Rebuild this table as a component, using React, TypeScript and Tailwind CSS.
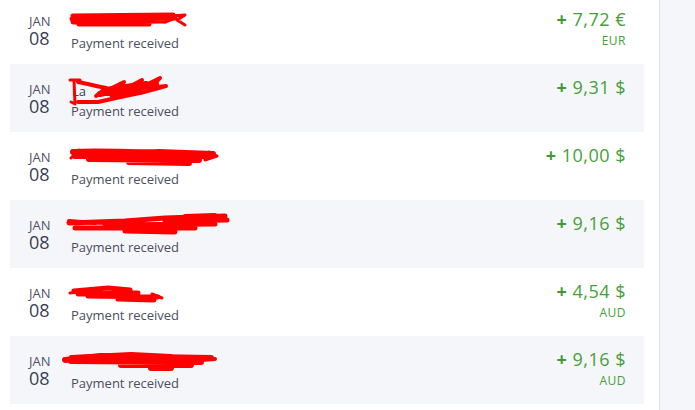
import React from "react";

type Tx = {
  amount: string;
  code?: string;
  scribble: React.ReactNode;
  gray: boolean;
};

const R = "#ff0000";
const P = {
  stroke: R,
  fill: "none",
  strokeLinecap: "round" as const,
  strokeLinejoin: "round" as const,
};

const S1 = (
  <svg className="absolute left-[59px] top-[15px]" width="122" height="18" viewBox="0 0 122 18">
    <path {...P} strokeWidth="5" d="M4 5 L104 4 M3 8 L106 7 M4 11 L96 10 M10 13 L80 13" />
    <path {...P} strokeWidth="3" d="M100 5 L116 4 L108 9 L116 14 M96 11 L104 8" />
  </svg>
);

const S2 = (
  <div className="absolute left-[56px] top-[8px] h-[36px] w-[108px]">
    <span className="absolute left-[6px] top-[10px] text-[13px] leading-[18px] text-[#3a3f51]">La</span>
    <svg className="absolute left-0 top-0" width="108" height="36" viewBox="0 0 108 36">
      <path {...P} strokeWidth="3" d="M4 8 L14 8 M8 8 L9 32 L5 30" />
      <path {...P} strokeWidth="4" d="M12 10 C22 12 30 14 40 16 L30 24 L58 10 L46 24 L76 8 L62 22 L94 6 L84 16 L100 14 L78 20 L50 26 L32 30 L12 30" />
      <path {...P} strokeWidth="6" d="M34 22 L70 14 L90 12 L46 22 L74 20 M40 18 L80 12" />
    </svg>
  </div>
);

const S3 = (
  <svg className="absolute left-[59px] top-[14px]" width="152" height="22" viewBox="0 0 152 22">
    <path {...P} strokeWidth="6" d="M4 6 C30 4 60 7 90 6 L144 8 M6 10 L140 10 M20 13 L130 14 M60 16 L120 17" />
    <path {...P} strokeWidth="3" d="M2 12 L10 4 M140 6 L148 10 L136 14" />
  </svg>
);

const S4 = (
  <svg className="absolute left-[55px] top-[11px]" width="170" height="26" viewBox="0 0 170 26">
    <path {...P} strokeWidth="5" d="M4 12 L60 10 L100 7 L160 5 M100 10 L162 9 M40 14 L150 13 M10 17 L130 17 M60 20 L110 21" />
    <path {...P} strokeWidth="4" d="M4 10 L30 12 M120 5 L150 4" />
  </svg>
);

const S5 = (
  <svg className="absolute left-[58px] top-[16px]" width="98" height="20" viewBox="0 0 98 20">
    <path {...P} strokeWidth="5" d="M6 7 L40 4 L62 6 M10 10 L70 9 M20 12 L90 13 M50 15 L86 16" />
    <path {...P} strokeWidth="3" d="M2 9 L10 8 M84 10 L94 14" />
  </svg>
);

const S6 = (
  <svg className="absolute left-[51px] top-[14px]" width="160" height="22" viewBox="0 0 160 22">
    <path {...P} strokeWidth="6" d="M4 10 L40 6 L90 7 L150 8 M10 11 L140 12 M60 15 L130 15 M90 18 L110 18" />
    <path {...P} strokeWidth="4" d="M10 7 L70 4 L110 6 M140 10 L154 9" />
  </svg>
);

const txs: Tx[] = [
  { amount: "7,72 €", code: "EUR", scribble: S1, gray: false },
  { amount: "9,31 $", scribble: S2, gray: true },
  { amount: "10,00 $", scribble: S3, gray: false },
  { amount: "9,16 $", scribble: S4, gray: true },
  { amount: "4,54 $", code: "AUD", scribble: S5, gray: false },
  { amount: "9,16 $", code: "AUD", scribble: S6, gray: true },
];

function Row({ tx }: { tx: Tx }) {
  return (
    <div className={`relative flex h-[68px] w-[634px] shrink-0 ${tx.gray ? "bg-[#f5f6fa]" : "bg-white"}`}>
      <div className="flex w-[61px] flex-col pl-[19px] pt-[18px]">
        <span className="text-[13px] leading-[15px] text-[#4d5468]">JAN</span>
        <span className="text-[18px] leading-[18px] text-[#3a3f51]">08</span>
      </div>
      <div className="flex flex-1 flex-col pt-[19px]">
        <div className="h-[20px]" />
        <span className="text-[13px] leading-[16px] text-[#4a4f5e]">Payment received</span>
      </div>
      <div className="flex flex-col items-end pr-[18px] pt-[12px]">
        <span className="text-[18px] leading-[22px] tracking-[0.5px] text-[#45a03a]">
          <span className="font-bold text-[#3f9a33]">+</span> {tx.amount}
        </span>
        {tx.code && (
          <span className="mt-[4px] text-[12px] leading-[14px] tracking-[0.5px] text-[#45a03a]">{tx.code}</span>
        )}
      </div>
      {tx.scribble}
    </div>
  );
}

export default function App() {
  return (
    <div
      className="flex h-[410px] w-[695px] overflow-hidden bg-white"
      style={{ fontFamily: '"Open Sans", "Noto Sans", sans-serif' }}
    >
      <div className="flex w-[659px] shrink-0 flex-col pl-[10px]">
        <div className="-mt-[4px] flex flex-col">
          {txs.map((tx, i) => (
            <Row key={i} tx={tx} />
          ))}
        </div>
      </div>
      <div className="flex-1 border-l border-[#dfe0e5] bg-[#f5f6fa]" />
    </div>
  );
}
